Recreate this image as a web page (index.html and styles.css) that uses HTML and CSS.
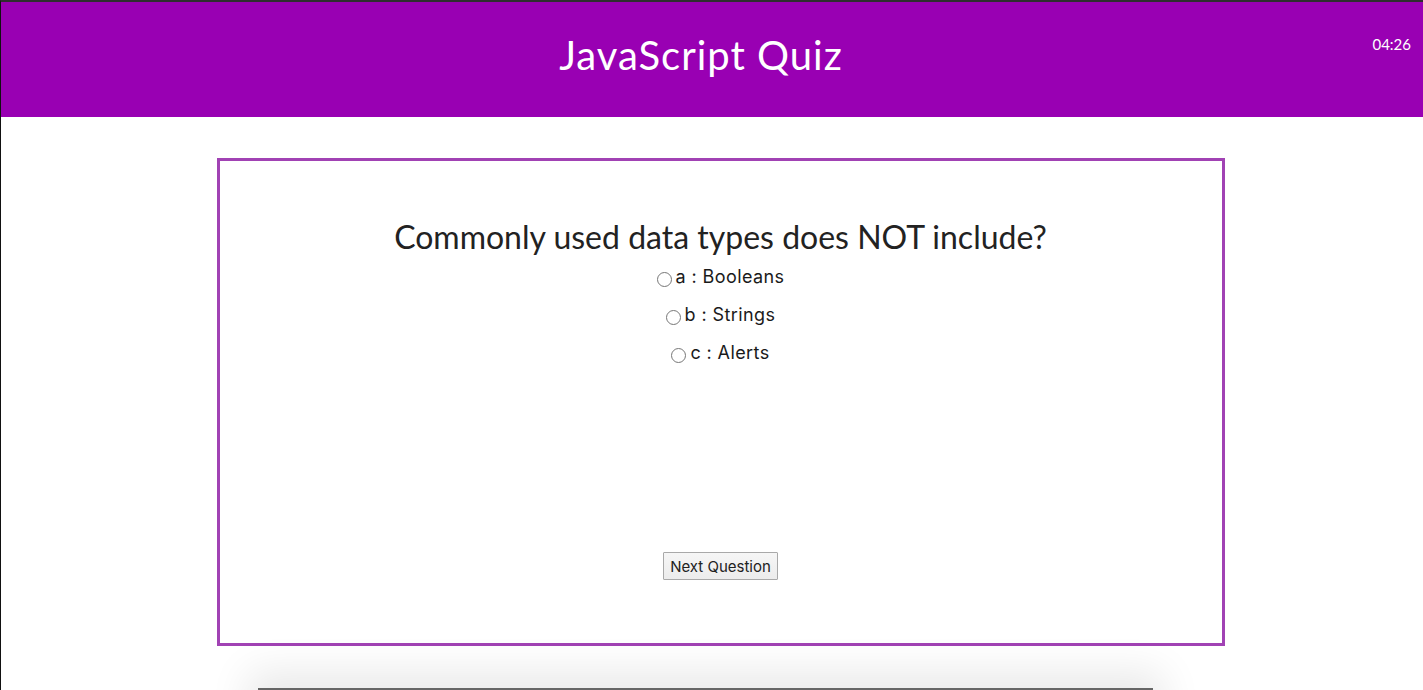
FILE: index.html
```html
<!DOCTYPE html>
<html lang="en">
<head>
<meta charset="utf-8">
<title>JavaScript Quiz</title>
<link rel="stylesheet" href="styles.css">
</head>
<body>
<header class="topbar">
  <div class="spacer"></div>
  <h1 class="title">JavaScript Quiz</h1>
  <div class="timer">04:26</div>
</header>
<main class="main">
  <section class="quiz-card">
    <h2 class="question">Commonly used data types does NOT include?</h2>
    <div class="options">
      <label class="option"><input type="radio" name="answer" value="a">a : Booleans</label>
      <label class="option"><input type="radio" name="answer" value="b">b : Strings</label>
      <label class="option"><input type="radio" name="answer" value="c">c : Alerts</label>
    </div>
    <button class="next-btn" type="button">Next Question</button>
  </section>
  <section class="score-card"></section>
</main>
</body>
</html>
```
FILE: styles.css
```css
html, body {
  margin: 0;
  padding: 0;
}
body {
  background: #ffffff;
  border-top: 2px solid #2e2e2e;
  border-left: 1px solid #111111;
  height: 688px;
  overflow: hidden;
  font-family: "Lato", "Open Sans", sans-serif;
}
.topbar {
  display: grid;
  grid-template-columns: 1fr auto 1fr;
  height: 115px;
  background: #9900b3;
  color: #ffffff;
  padding-right: 12px;
}
.title {
  grid-column: 2;
  margin: 0 10px 0 0;
  font-weight: 400;
  font-size: 40px;
  line-height: 106px;
  letter-spacing: 1px;
}
.timer {
  grid-column: 3;
  justify-self: end;
  align-self: start;
  margin-top: 33px;
  font-size: 15px;
  line-height: 18px;
}
.main {
  display: flex;
  flex-direction: column;
  align-items: center;
  padding-left: 17px;
}
.quiz-card {
  box-sizing: border-box;
  width: 1008px;
  height: 488px;
  margin-top: 41px;
  border: 3px solid #a142b4;
  display: flex;
  flex-direction: column;
  align-items: center;
  padding-top: 58px;
}
.question {
  margin: 0;
  font-weight: 400;
  font-size: 32px;
  line-height: 36px;
  color: #222222;
}
.options {
  display: flex;
  flex-direction: column;
  align-items: center;
  margin-top: 3px;
}
.option {
  display: block;
  height: 38px;
  line-height: 38px;
  font-family: "Inter", "Roboto", sans-serif;
  font-size: 18px;
  letter-spacing: 0.4px;
  color: #1a1a1a;
}
.option input {
  margin: 0 4px 0 0;
  width: 15px;
  height: 15px;
  vertical-align: -4px;
}
.next-btn {
  margin-top: 180px;
  height: 28px;
  padding: 0 6px;
  font-family: "Inter", "Roboto", sans-serif;
  font-size: 15px;
  color: #222222;
  background: linear-gradient(#f6f6f6, #ececec);
  border: 1px solid #a9a9a9;
  border-radius: 1px;
}
.score-card {
  width: 895px;
  height: 60px;
  margin-top: 42px;
  margin-right: 31px;
  border-top: 2px solid #666666;
  box-shadow: 0 -6px 40px 10px rgba(0, 0, 0, 0.09);
  background: #ffffff;
}
```
